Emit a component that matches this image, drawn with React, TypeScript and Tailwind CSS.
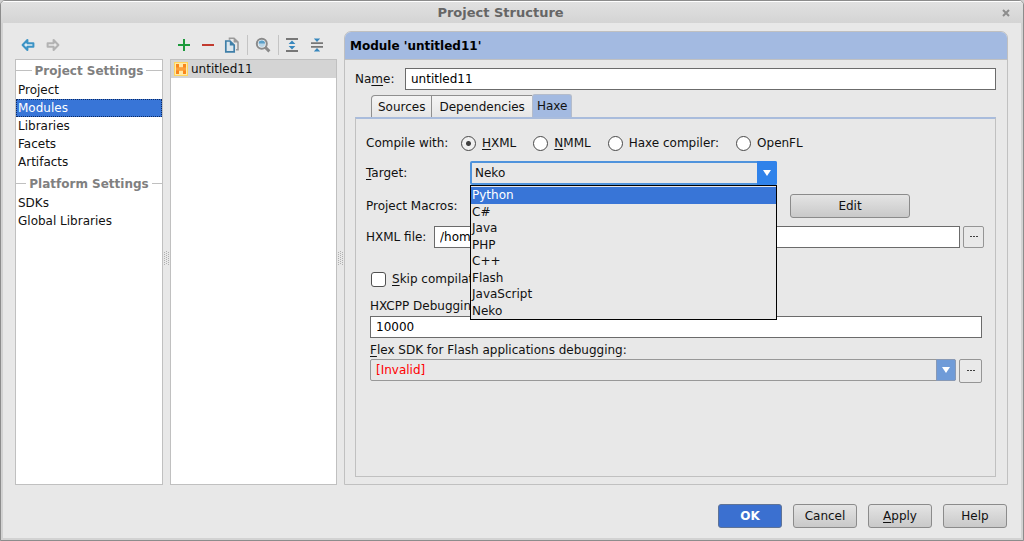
import type { ReactNode } from "react";

const projectSettings = ["Project", "Modules", "Libraries", "Facets", "Artifacts"];
const platformSettings = ["SDKs", "Global Libraries"];
const targets = ["Python", "C#", "Java", "PHP", "C++", "Flash", "JavaScript", "Neko"];

const field =
  "h-[22px] min-w-0 flex-1 border border-[#6b6b6b] bg-white px-[5px] text-xs text-black outline-none";
const pushButton =
  "h-6 rounded-[3px] border border-[#8b8b8b] bg-gradient-to-b from-[#e4e4e4] to-[#c9c9c9] text-xs";

function U({ children }: { children: ReactNode }) {
  return <span className="underline underline-offset-2">{children}</span>;
}

function SettingsGroup({ title, items, active }: { title: string; items: string[]; active?: string }) {
  return (
    <section>
      <h2 className="flex h-[21px] items-center gap-[3px] font-bold text-[#808080] before:h-px before:flex-1 before:bg-[#c0c0c0] after:h-px after:flex-1 after:bg-[#c0c0c0]">
        {title}
      </h2>
      <ul>
        {items.map((item) => (
          <li key={item}>
            <a
              href="#"
              className={
                item === active
                  ? "block h-[18px] bg-[#3875d7] px-[2px] leading-[18px] text-white outline-1 -outline-offset-1 outline-dotted outline-[#0b2a63]"
                  : "block h-[18px] px-[2px] leading-[18px]"
              }
            >
              {item}
            </a>
          </li>
        ))}
      </ul>
    </section>
  );
}

function Splitter() {
  return (
    <div className="flex w-[7px] shrink-0 items-center justify-center">
      <svg width="5" height="15" viewBox="0 0 5 15" fill="#b0b0b0">
        {[0, 2, 4, 6, 8, 10, 12].map((y) => (
          <g key={y}>
            <rect x="0" y={y + 1} width="1" height="1" />
            <rect x="2" y={y} width="1" height="1" />
            <rect x="4" y={y + 1} width="1" height="1" />
          </g>
        ))}
      </svg>
    </div>
  );
}

function NavArrow({ color, fill, flip }: { color: string; fill: string; flip?: boolean }) {
  return (
    <svg width="16" height="16" viewBox="0 0 16 16">
      <path
        d={
          flip
            ? "M13.4 8 L8.6 3 V6.2 H2.6 V9.8 H8.6 V13 Z"
            : "M2.6 8 L7.4 3 V6.2 H13.4 V9.8 H7.4 V13 Z"
        }
        fill={fill}
        stroke={color}
        strokeWidth="2"
        strokeLinejoin="round"
      />
    </svg>
  );
}

function Icon({ children }: { children: ReactNode }) {
  return (
    <svg width="16" height="16" viewBox="0 0 16 16" fill="none" className="block">
      {children}
    </svg>
  );
}

function ToolSeparator() {
  return <span className="-mx-px h-5 w-px bg-[#c4c4c4]" />;
}

function Toolbar() {
  return (
    <div className="flex h-7 items-center gap-2 pl-[6px]">
      <button aria-label="Add">
        <Icon>
          <path d="M8 2v12M2 8h12" stroke="#1d9a3c" strokeWidth="2" />
        </Icon>
      </button>
      <button aria-label="Remove">
        <Icon>
          <path d="M2 8h12" stroke="#c23a2e" strokeWidth="2" />
        </Icon>
      </button>
      <button aria-label="Copy">
        <Icon>
          <path d="M5.5 2.8V1.2H10l4 4v7.6h-2" stroke="#9a9a9a" strokeWidth="1.6" />
          <path d="M9.6 1v4.6h4.6z" fill="#9a9a9a" />
          <path d="M1.8 4H6l4.2 4v6.8H1.8z" fill="#dbe6ed" stroke="#3f7fa8" strokeWidth="1.7" />
          <path d="M5.8 3.8v4.6h4.6z" fill="#3f7fa8" />
        </Icon>
      </button>
      <ToolSeparator />
      <button aria-label="Find">
        <Icon>
          <path d="M10.2 10.2l4.2 4.2" stroke="#8a8a8a" strokeWidth="3" />
          <circle cx="6.8" cy="6.8" r="5" fill="#eef3f6" stroke="#8a8a8a" strokeWidth="2" />
          <circle cx="6.8" cy="6.8" r="3.2" fill="#b9d5e6" />
          <path d="M3.6 6.6a3.2 3.2 0 0 1 6.4 0z" fill="#5a9fc8" />
        </Icon>
      </button>
      <ToolSeparator />
      <button aria-label="Expand all">
        <Icon>
          <path d="M0 2h12M0 14h12" stroke="#777777" strokeWidth="1.8" />
          <path d="M6 3.6L9.4 7H2.6zM6 12.4L2.6 9h6.8z" fill="#3787bd" />
        </Icon>
      </button>
      <button aria-label="Collapse all">
        <Icon>
          <path d="M1 6.2h12M1 9.8h12" stroke="#777777" strokeWidth="1.8" />
          <path d="M7 5L3.8 1.4h6.4zM7 11l3.2 3.6H3.8z" fill="#3787bd" />
        </Icon>
      </button>
    </div>
  );
}

function HaxeIcon() {
  return (
    <svg width="14" height="14" viewBox="0 0 14 14">
      <rect width="14" height="14" fill="#ffd65c" />
      <rect x="1" y="1" width="12" height="12" fill="#ffe9a6" />
      <path d="M2 2h3v3.6h4V2h3v10H9V8.6H5V12H2z" fill="#f9861c" />
      <path d="M2 5.6h10v3H2z" fill="#fba03a" />
    </svg>
  );
}

function DownArrow() {
  return (
    <svg width="8" height="6" viewBox="0 0 8 6">
      <path d="M0 0h8L4 6z" fill="#ffffff" />
    </svg>
  );
}

function Radio({ checked, children }: { checked?: boolean; children: ReactNode }) {
  return (
    <label className="flex items-center gap-[6px]">
      <input
        type="radio"
        name="compiler"
        defaultChecked={checked}
        className="size-[15px] appearance-none rounded-full border border-[#484848] bg-white checked:bg-[#f0f0f0] checked:bg-[radial-gradient(circle,#404040_2px,transparent_3px)]"
      />
      <span>{children}</span>
    </label>
  );
}

function BrowseButton({ label, className }: { label: string; className: string }) {
  return (
    <button
      aria-label={label}
      className={`flex shrink-0 items-center justify-center rounded-[2px] border border-[#959595] bg-[#e9e9e9] ${className}`}
    >
      <svg width="8" height="2" viewBox="0 0 8 2" fill="#404040">
        <path d="M0 0h2v1H0zM3 0h2v1H3zM6 0h2v1H6z" />
      </svg>
    </button>
  );
}

function HaxePanel() {
  return (
    <div className="flex-1 border border-t-2 border-[#c0c0c0] border-t-[#a9bcdc] pt-3 pr-[11px] pl-[10px]">
      <div className="flex h-6 items-center">
        <span className="w-[95px] shrink-0">Compile with:</span>
        <div role="radiogroup" aria-label="Compile with" className="flex gap-[17px]">
          <Radio checked>
            <U>H</U>XML
          </Radio>
          <Radio>
            <U>N</U>MML
          </Radio>
          <Radio>Haxe compiler:</Radio>
          <Radio>OpenFL</Radio>
        </div>
      </div>

      <div className="mt-[6px] flex h-6 items-center">
        <label htmlFor="target" className="w-[104px] shrink-0">
          <U>T</U>arget:
        </label>
        <div className="relative w-[307px]">
          <select
            id="target"
            defaultValue="Neko"
            className="block h-6 w-full appearance-none rounded-[2px] border-2 border-[#4f93dc] bg-[#e8e8e8] px-[3px] pb-px text-xs outline-none"
          >
            {targets.map((t) => (
              <option key={t}>{t}</option>
            ))}
          </select>
          <span className="pointer-events-none absolute inset-y-0 right-0 flex w-5 items-center justify-center rounded-r-[2px] bg-[#2f82ea]">
            <DownArrow />
          </span>
          <ul
            role="listbox"
            aria-label="Target"
            className="absolute inset-x-0 top-full z-10 flex h-[135px] flex-col border border-black bg-[#e8e8e8] pt-px"
          >
            {targets.map((t, i) => (
              <li
                key={t}
                role="option"
                aria-selected={i === 0}
                className={
                  i === 0
                    ? "flex flex-1 items-center bg-[#3875d7] px-px leading-4 text-white"
                    : "flex flex-1 items-center px-px leading-4"
                }
              >
                {t}
              </li>
            ))}
          </ul>
        </div>
      </div>

      <div className="mt-[9px] flex h-6 items-center">
        <span className="w-[424px]">Project Macros:</span>
        <button className={`${pushButton} w-[120px]`}>Edit</button>
      </div>

      <div className="mt-2 flex items-center">
        <label htmlFor="hxml" className="w-[68px] shrink-0">
          HXML file:
        </label>
        <input id="hxml" defaultValue="/home" className={field} />
        <BrowseButton label="Browse HXML file" className="ml-[3px] h-[22px] w-[21px]" />
      </div>

      <div className="mt-[23px] flex h-4 items-center gap-[6px] pl-[5px]">
        <input
          id="skip"
          type="checkbox"
          className="size-[15px] appearance-none rounded-[3px] border border-[#505050] bg-white"
        />
        <label htmlFor="skip">
          <U>S</U>kip compilation
        </label>
      </div>

      <div className="mt-[11px] flex flex-col pr-[2px] pl-[4px]">
        <label htmlFor="port" className="mb-[2px]">
          HXCPP Debugging port:
        </label>
        <div className="flex">
          <input id="port" defaultValue="10000" className={field} />
        </div>
        <label htmlFor="flex" className="mt-1">
          <U>F</U>lex SDK for Flash applications debugging:
        </label>
        <div className="mt-px flex items-start gap-[3px]">
          <div className="relative flex-1">
            <select
              id="flex"
              className="block h-[22px] w-full appearance-none rounded-[2px] border border-[#989898] bg-[#e8e8e8] px-[5px] pb-px text-xs text-[#ff0000] outline-none"
            >
              <option>[Invalid]</option>
            </select>
            <span className="pointer-events-none absolute inset-y-0 right-0 flex w-5 items-center justify-center rounded-r-[2px] border border-[#8899b5] bg-[#6f9bd8]">
              <DownArrow />
            </span>
          </div>
          <BrowseButton label="Browse Flex SDK" className="h-6 w-[23px]" />
        </div>
      </div>
    </div>
  );
}

export default function App() {
  return (
    <div className="bg-[#d0d0d0]">
      <div className="flex min-h-screen flex-col overflow-hidden rounded-t-[5px] border border-[#8c8c8c] bg-[#e8e8e8] font-['DejaVu_Sans',sans-serif] text-xs leading-4 text-[#111111]">
        <header className="flex h-[22px] items-center border-t border-white bg-gradient-to-b from-[#e1e1e1] to-[#d4d4d4] pr-[11px] pl-3">
          <span className="w-3" />
          <h1 className="flex-1 text-center text-[13px] font-bold text-[#666666] pr-6">Project Structure</h1>
          <button aria-label="Close" className="flex w-3 justify-center">
            <svg width="8" height="8" viewBox="0 0 8 8">
              <path d="M1 1l6 6M7 1L1 7" stroke="#8d8d8d" strokeWidth="2" />
            </svg>
          </button>
        </header>

        <div className="flex flex-1 flex-col border-x-2 border-b-2 border-[#d2d2d2] pt-2">
          <main className="flex flex-1 pr-[13px] pl-3">
            <nav className="flex w-[148px] shrink-0 flex-col">
              <div className="flex h-7 items-center gap-[9px] pl-[5px]">
                <button aria-label="Back">
                  <NavArrow color="#3b93c5" fill="#dcebf3" />
                </button>
                <button aria-label="Forward">
                  <NavArrow color="#b2b2b2" fill="#e8e8e8" flip />
                </button>
              </div>
              <div className="flex flex-1 flex-col gap-[2px] border border-[#c0c0c0] bg-white">
                <SettingsGroup title="Project Settings" items={projectSettings} active="Modules" />
                <SettingsGroup title="Platform Settings" items={platformSettings} />
              </div>
            </nav>

            <Splitter />

            <section className="flex w-[167px] shrink-0 flex-col">
              <Toolbar />
              <div className="flex-1 border border-[#c0c0c0] bg-white">
                <div className="flex h-[18px] items-center gap-[3px] bg-[#d4d4d4] pl-[3px]">
                  <HaxeIcon />
                  untitled11
                </div>
              </div>
            </section>

            <Splitter />

            <section className="flex min-w-0 flex-1 flex-col rounded-t-[7px] border border-[#c0c0c0]">
              <h2 className="flex h-7 items-center rounded-t-[6px] border-b border-[#c0c0c0] bg-[#a3bae1] pl-[5px] font-bold text-black">
                Module 'untitled11'
              </h2>
              <div className="flex flex-1 flex-col pt-2 pr-[11px] pb-[7px] pl-[10px]">
                <div className="flex items-center">
                  <label htmlFor="name" className="w-[50px] shrink-0">
                    Na<U>m</U>e:
                  </label>
                  <input id="name" defaultValue="untitled11" className={field} />
                </div>
                <div role="tablist" className="mt-1 flex h-[23px] items-end pl-4">
                  <button
                    role="tab"
                    className="h-[22px] rounded-tl-[4px] border border-b-0 border-[#8f8f8f] bg-gradient-to-b from-[#f4f4f4] to-[#e6e6e6] px-[6px]"
                  >
                    Sources
                  </button>
                  <button
                    role="tab"
                    className="h-[22px] border-t border-[#8f8f8f] bg-gradient-to-b from-[#f4f4f4] to-[#e6e6e6] px-[7px]"
                  >
                    Dependencies
                  </button>
                  <button
                    role="tab"
                    aria-selected="true"
                    className="h-[23px] rounded-t-[3px] border border-b-0 border-[#b4bccb] bg-[#a3bae1] px-1"
                  >
                    Haxe
                  </button>
                </div>
                <HaxePanel />
              </div>
            </section>
          </main>

          <footer className="flex justify-end gap-[11px] pt-[19px] pr-[14px] pb-[10px]">
            <button className="h-6 w-16 rounded-[3px] border border-[#5f7396] bg-[#3b70d0] text-xs font-bold text-white">
              OK
            </button>
            <button className={`${pushButton} w-16`}>Cancel</button>
            <button className={`${pushButton} w-16`}>
              <U>A</U>pply
            </button>
            <button className={`${pushButton} w-16`}>Help</button>
          </footer>
        </div>
      </div>
    </div>
  );
}
